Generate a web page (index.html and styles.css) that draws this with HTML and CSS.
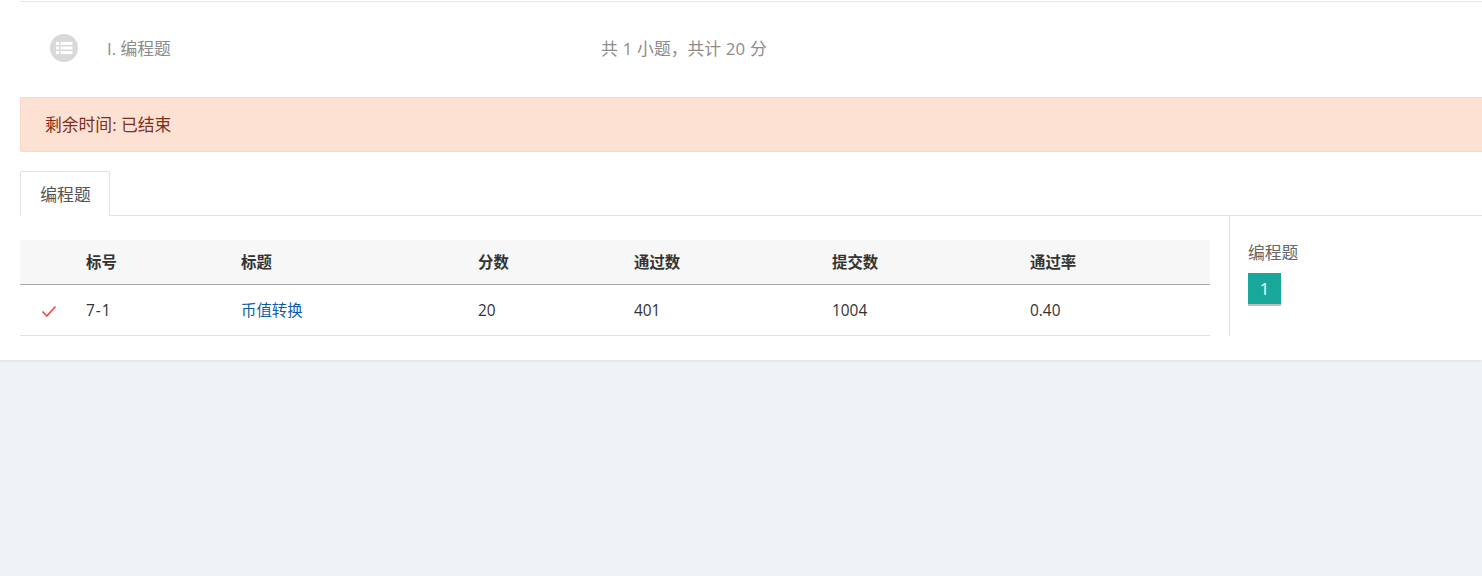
FILE: index.html
```html
<!DOCTYPE html>
<html lang="zh-CN">
<head>
<meta charset="utf-8">
<title>编程题</title>
<link rel="stylesheet" href="styles.css">
</head>
<body>
<main class="card">
  <section class="summary">
    <span class="summary-icon">
      <svg viewBox="0 0 28 28" width="28" height="28" aria-hidden="true">
        <circle cx="14" cy="14" r="14" fill="#d9d9d9"/>
        <g fill="#fff">
          <rect x="6" y="8" width="3" height="3"/>
          <rect x="6" y="12.5" width="3" height="3"/>
          <rect x="6" y="17" width="3" height="3"/>
          <rect x="10.5" y="8" width="12" height="3"/>
          <rect x="10.5" y="12.5" width="12" height="3"/>
          <rect x="10.5" y="17" width="12" height="3"/>
        </g>
      </svg>
    </span>
    <span class="summary-title">I. 编程题</span>
    <span class="summary-count">共 1 小题，共计 20 分</span>
  </section>
  <div class="alert">剩余时间: 已结束</div>
  <nav class="tabs"><span class="tab">编程题</span></nav>
  <div class="panel">
    <div class="table-wrap">
      <table class="problems">
        <colgroup>
          <col class="c-icon"><col class="c-id"><col class="c-title"><col class="c-score"><col class="c-pass"><col class="c-submit"><col class="c-rate">
        </colgroup>
        <thead>
          <tr><th></th><th>标号</th><th>标题</th><th>分数</th><th>通过数</th><th>提交数</th><th>通过率</th></tr>
        </thead>
        <tbody>
          <tr>
            <td class="check-cell">
              <svg viewBox="0 0 16 14" width="16" height="14" aria-hidden="true"><path d="M1.5 7.5 L5.8 12 L14.5 2.5" fill="none" stroke="#f0504a" stroke-width="1.8"/></svg>
            </td>
            <td class="id-cell">7-1</td>
            <td><a class="link" href="#">币值转换</a></td>
            <td>20</td>
            <td>401</td>
            <td>1004</td>
            <td>0.40</td>
          </tr>
        </tbody>
      </table>
    </div>
    <aside class="side">
      <h3 class="side-title">编程题</h3>
      <span class="side-num">1</span>
    </aside>
  </div>
</main>
</body>
</html>
```
FILE: styles.css
```css
* { box-sizing: border-box; }
html, body { margin: 0; padding: 0; height: 100%; }
body {
  background: #eff3f6;
  font-family: "Open Sans", "Noto Sans CJK SC", sans-serif;
  color: #333;
  overflow: hidden;
}
.card {
  background: #fff;
  height: 360px;
  padding: 1px 0 0 20px;
  box-shadow: 0 1px 3px rgba(0, 0, 0, 0.08);
}
.summary {
  display: flex;
  align-items: center;
  height: 96px;
  padding-bottom: 4px;
  border-top: 1px solid #e6e6e6;
  color: #8c8c8c;
  font-size: 16.8px;
  line-height: 24px;
}
.summary-icon { display: flex; margin-left: 30px; width: 28px; height: 28px; }
.summary-title { margin: 2px 0 0 29px; width: 494px; }
.summary-count { margin-top: 2px; word-spacing: 0.5px; }
.alert {
  height: 55px;
  line-height: 54px;
  padding-left: 24px;
  background: #fde2d4;
  border: 1px solid #f8d9c8;
  border-right: 0;
  border-radius: 2px 0 0 2px;
  color: #7d2f1c;
  font-size: 16.8px;
}
.tabs {
  margin-top: 19px;
  height: 45px;
  border-bottom: 1px solid #e2e2e2;
  display: flex;
}
.tab {
  width: 90px;
  height: 45px;
  line-height: 46px;
  padding-left: 1px;
  text-align: center;
  font-size: 16.8px;
  color: #555;
  background: #fff;
  border: 1px solid #e2e2e2;
  border-bottom: 0;
  border-radius: 2px 2px 0 0;
}
.panel { display: flex; height: 120px; }
.table-wrap { width: 1190px; padding-top: 24px; flex: none; }
.problems { width: 1190px; border-collapse: collapse; table-layout: fixed; font-size: 15.4px; }
.c-icon { width: 66px; }
.c-id { width: 155px; }
.c-title { width: 237px; }
.c-score { width: 156px; }
.c-pass { width: 198px; }
.c-submit { width: 198px; }
.c-rate { width: 180px; }
.problems th {
  height: 44px;
  padding: 2px 0 0;
  text-align: left;
  font-weight: 700;
  font-size: 15.4px;
  line-height: 22px;
  color: #333;
  background: #f7f7f7;
  border-bottom: 1px solid #aaa;
}
.problems td {
  height: 51px;
  padding: 3px 0 0;
  line-height: 22px;
  color: #333;
  border-bottom: 1px solid #e2e2e2;
}
.problems .check-cell { padding: 0; }
.problems .id-cell { letter-spacing: 1px; }
.check-cell svg { display: block; margin: 2px 0 0 21px; }
.link { color: #0f5da8; text-decoration: none; }
.side {
  margin-left: 19px;
  padding: 27px 0 0 18px;
  border-left: 1px solid #ddd;
  flex: 1;
}
.side-title {
  margin: 0 0 10px;
  font-size: 16.8px;
  font-weight: 400;
  line-height: 20px;
  color: #666;
}
.side-num {
  display: block;
  width: 33px;
  height: 33px;
  line-height: 31px;
  text-align: center;
  color: #fff;
  font-size: 16.8px;
  background: #17a89b;
  border-bottom: 2px solid #bdbdbd;
}
```
